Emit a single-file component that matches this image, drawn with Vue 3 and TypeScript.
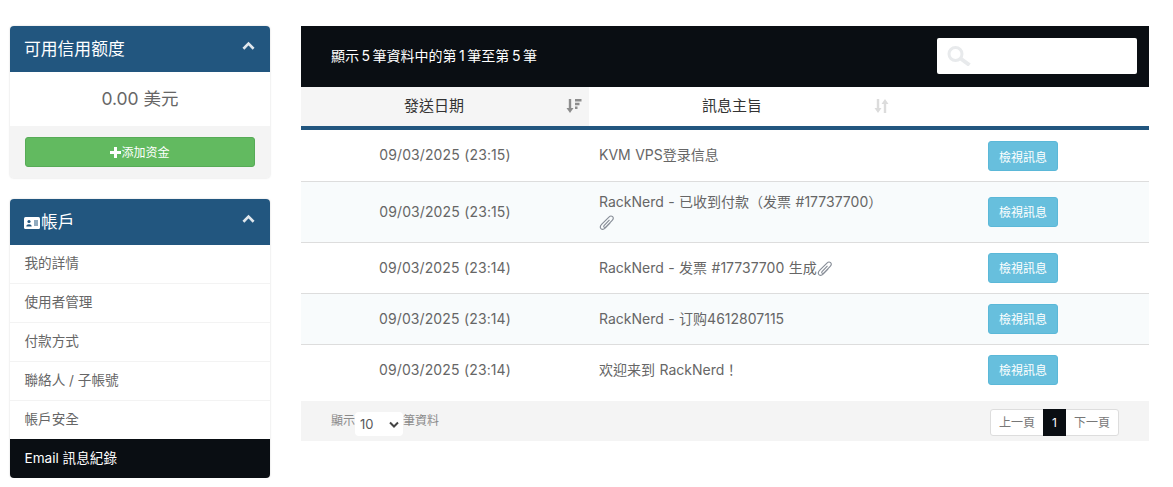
<script setup lang="ts">
interface Row { date: string; subject: string; clip: boolean; kind?: string }
const menu: string[] = ['我的詳情', '使用者管理', '付款方式', '聯絡人 / 子帳號', '帳戶安全']
const rows: Row[] = [
  { date: '09/03/2025 (23:15)', subject: 'KVM VPS登录信息', clip: false, kind: 'first' },
  { date: '09/03/2025 (23:15)', subject: 'RackNerd - 已收到付款（发票 #17737700）', clip: true, kind: 'tall' },
  { date: '09/03/2025 (23:14)', subject: 'RackNerd - 发票 #17737700 生成', clip: true },
  { date: '09/03/2025 (23:14)', subject: 'RackNerd - 订购4612807115', clip: false },
  { date: '09/03/2025 (23:14)', subject: '欢迎来到 RackNerd！', clip: false, kind: 'last' },
]
const clipPath = 'M11.2 5.2 5.6 11c-.7.8-.7 1.500-.2 2 .6.5 1.300.4 2-.3l6.700-7c1.300-1.400 1.400-2.900.4-3.900-1.100-1-2.600-.9-3.900.4L3 9.800C1.200 11.700 1 13.500 2.100 14.600c1.100 1 2.900.9 4.700-.9L12 8.500'
</script>

<template>
  <div class="page">
    <aside class="side">
      <section class="panel">
        <header class="panel-head">
          <h3>可用信用额度</h3>
          <svg class="chev" viewBox="0 0 14 10"><path d="M1.5 8 7 2.500 12.500 8" /></svg>
        </header>
        <div class="balance">0.00 美元</div>
        <div class="panel-foot">
          <button class="add">
            <svg class="plus" viewBox="0 0 11 11"><path d="M5.500 0v11M0 5.500h11" /></svg><span>添加资金</span>
          </button>
        </div>
      </section>
      <section class="panel">
        <header class="panel-head">
          <h3 class="with-icon">
            <svg class="card" viewBox="0 0 16 12">
              <rect width="16" height="12" rx="1.500" fill="#fff" />
              <circle cx="5" cy="4.500" r="1.600" fill="#22567f" />
              <path d="M2.300 9.500c0-3 5.400-3 5.400 0z" fill="#22567f" />
              <path d="M10 4h4M10 6h4M10 8h4" stroke="#22567f" stroke-width="1" />
            </svg>帳戶
          </h3>
          <svg class="chev" viewBox="0 0 14 10"><path d="M1.5 8 7 2.500 12.500 8" /></svg>
        </header>
        <nav class="menu">
          <a v-for="m in menu" :key="m" class="item">{{ m }}</a>
          <a class="item active">Email 訊息紀錄</a>
        </nav>
      </section>
    </aside>

    <main class="main">
      <div class="top">
        <span class="info">顯示 5 筆資料中的第 1 筆至第 5 筆</span>
        <div class="search">
          <svg viewBox="0 0 24 20"><circle cx="8.500" cy="8" r="6.500" /><path class="h" d="M13.500 12.500l9 6.500" /></svg>
        </div>
      </div>
      <table class="tbl">
        <colgroup><col class="c1" /><col class="c2" /><col /></colgroup>
        <thead>
          <tr>
            <th class="sorted">
              發送日期
              <svg class="sort" viewBox="0 0 16 16">
                <path d="M4.500 1v11" stroke="#8d8d8d" stroke-width="2.400" />
                <path d="M1 10h7l-3.500 5z" fill="#8d8d8d" />
                <path d="M9.500 2.200h6.500M9.500 6h4.500M9.500 9.800h2.500" stroke="#8d8d8d" stroke-width="2.400" />
              </svg>
            </th>
            <th>
              訊息主旨
              <svg class="sort" viewBox="0 0 16 16">
                <path d="M4.500 1v10M11.500 15V5" stroke="#dcdcdc" stroke-width="2.400" />
                <path d="M1 10h7l-3.500 5zM8 6h7l-3.500-5z" fill="#dcdcdc" />
              </svg>
            </th>
            <th></th>
          </tr>
        </thead>
        <tbody>
          <tr v-for="(r, i) in rows" :key="i" :class="[r.kind, { odd: i % 2 === 1 }]">
            <td class="date">{{ r.date }}</td>
            <td class="subj">
              {{ r.subject }}<svg v-if="r.clip" class="clip" viewBox="0 0 16 16"><path :d="clipPath" /></svg>
            </td>
            <td class="act"><button class="view">檢視訊息</button></td>
          </tr>
        </tbody>
      </table>
      <div class="foot">
        <div class="len">
          <span>顯示</span>
          <div class="sel">
            <select><option>10</option></select>
            <svg viewBox="0 0 10 7"><path d="M1 1.500 5 5.500 9 1.500" /></svg>
          </div>
          <span>筆資料</span>
        </div>
        <div class="pager">
          <a>上一頁</a><a class="cur">1</a><a>下一頁</a>
        </div>
      </div>
    </main>
  </div>
</template>

<style>
html, body { margin: 0; background: #fff; }
</style>

<style scoped>
.page {
  display: grid;
  grid-template-columns: 260px 848px;
  column-gap: 31px;
  padding: 26px 0 0 10px;
  font-family: Inter, "Noto Sans CJK TC", sans-serif;
  font-size: 14px;
  color: #666;
}
.side { display: flex; flex-direction: column; gap: 21px; }
.panel {
  border-radius: 4px;
  overflow: hidden;
  background: #fff;
  box-shadow: 0 0 2px rgba(0, 0, 0, .18);
}
.panel-head {
  height: 46px;
  background: #22567f;
  color: #fff;
  display: flex;
  align-items: center;
  justify-content: space-between;
  padding: 0 15px 0 14px;
}
h3 { margin: 0; font-size: 16.800px; font-weight: 400; line-height: 46px; }
.with-icon { display: flex; align-items: center; }
.card { width: 16px; height: 12px; margin: 1px 1px 0 0; }
.chev { width: 13px; height: 10px; margin-bottom: 6px; }
.chev path { fill: none; stroke: #dfe6ec; stroke-width: 2.800; }
.balance { height: 54px; line-height: 54px; text-align: center; font-size: 17.500px; }
.panel-foot { height: 52px; background: #f4f4f4; padding: 11px 15px 0; box-sizing: border-box; }
.add {
  width: 100%;
  height: 30px;
  border: 1px solid #57ab57;
  border-radius: 3px;
  background: #62ba60;
  color: #fff;
  font: 12px Inter, "Noto Sans CJK TC", sans-serif;
  display: flex;
  align-items: center;
  justify-content: center;
  padding: 0 0 2px;
}
.plus { width: 11px; height: 11px; margin-top: 2px; }
.plus path { stroke: #fff; stroke-width: 3; }
.menu { display: flex; flex-direction: column; }
.item {
  height: 39px;
  box-sizing: border-box;
  border-bottom: 1px solid #f3f3f3;
  padding: 0 14.500px;
  line-height: 37px;
  font-size: 13.600px;
  color: #666;
}
.item.active { margin-top: -1px; background: #0a0e13; color: #fff; border: 0; line-height: 38px; }
.top {
  height: 61px;
  background: #0a0e13;
  color: #fff;
  display: flex;
  align-items: center;
  justify-content: space-between;
  padding: 0 12px 0 30px;
  font-size: 14px;
}
.info { word-spacing: -1.400px; margin-bottom: 4px; }
.search {
  width: 200px;
  height: 36px;
  margin-bottom: 1px;
  background: #fff;
  border-radius: 2px;
  display: flex;
  align-items: center;
  padding-left: 10px;
  box-sizing: border-box;
}
.search svg { width: 24px; height: 20px; }
.search circle { fill: none; stroke: #e8eaec; stroke-width: 3; }
.search .h { fill: none; stroke: #e8eaec; stroke-width: 4; }
.tbl { width: 848px; table-layout: fixed; border-collapse: collapse; }
.c1 { width: 288px; }
.c2 { width: 308px; }
th {
  height: 34px;
  padding: 0 32px 5px 10px;
  font-weight: 400;
  font-size: 15px;
  color: #333;
  text-align: center;
  position: relative;
  border-bottom: 4px solid #22567f;
}
th.sorted { background: #f5f5f5; }
.sort { position: absolute; right: 7px; top: 11px; width: 17px; height: 16px; }
td { padding: 0 10px; border-bottom: 1px solid #ddd; height: 51px; line-height: 20px; box-sizing: border-box; word-spacing: .5px; }
tr.first td { border-top: 1px solid #e4e4e4; height: 53px; }
tr.first .act { padding-top: 2px; }
tr.tall td { height: 61px; }
tr.last td { height: 57px; border-bottom: 0; padding-bottom: 6px; }
tr.odd td { background: #f8fbfc; }
.date { text-align: center; letter-spacing: .1px; }
.clip { width: 15px; height: 15px; vertical-align: -3px; }
.clip path { fill: none; stroke: #878d97; stroke-width: 1.200; }
.act { text-align: center; }
.view {
  width: 70px;
  height: 30px;
  padding: 0;
  border: 1px solid #5bb8d8;
  border-radius: 3px;
  background: #67bfdd;
  color: #fff;
  font: 12px Inter, "Noto Sans CJK TC", sans-serif;
}
.foot {
  height: 40px;
  background: #f4f4f4;
  display: flex;
  justify-content: space-between;
  align-items: flex-start;
  padding: 0 30px;
  font-size: 12px;
  color: #8a8a8a;
}
.len { display: flex; align-items: flex-start; padding-top: 11px; }
.len > span { line-height: 18px; }
.sel { position: relative; width: 48px; height: 24px; }
.sel select {
  appearance: none;
  width: 100%;
  height: 100%;
  border: 0;
  border-radius: 4px;
  background: #fff;
  padding: 0 0 0 5px;
  font: 13px Inter, sans-serif;
  color: #58595b;
}
.sel svg { position: absolute; right: 4px; top: 9px; width: 10px; height: 7px; pointer-events: none; }
.sel path { fill: none; stroke: #444; stroke-width: 2; }
.pager {
  display: flex;
  height: 27px;
  box-sizing: border-box;
  margin-top: 8px;
  border: 1px solid #ddd;
  border-radius: 3px;
  background: #fff;
  font-size: 12px;
  color: #777;
}
.pager a { width: 52px; text-align: center; line-height: 25px; }
.pager .cur { width: 23px; background: #0a0e13; color: #fff; margin: -1px 0; line-height: 27px; }
</style>
